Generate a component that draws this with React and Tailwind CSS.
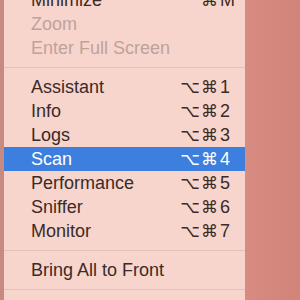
import React from 'react';

const ROWS = [
  { label: 'Minimize', mods: '⌘', key: 'M' },
  { label: 'Zoom', disabled: true },
  { label: 'Enter Full Screen', disabled: true },
  { sep: true },
  { label: 'Assistant', mods: '⌥⌘', key: '1' },
  { label: 'Info', mods: '⌥⌘', key: '2' },
  { label: 'Logs', mods: '⌥⌘', key: '3' },
  { label: 'Scan', mods: '⌥⌘', key: '4', active: true },
  { label: 'Performance', mods: '⌥⌘', key: '5' },
  { label: 'Sniffer', mods: '⌥⌘', key: '6' },
  { label: 'Monitor', mods: '⌥⌘', key: '7' },
  { sep: true },
  { label: 'Bring All to Front' },
  { sep: true },
];

function Row({ row }) {
  if (row.sep) {
    return (
      <div className="h-[15px] flex items-center">
        <div className="w-full h-px bg-[#e6bfb5]" />
      </div>
    );
  }
  const color = row.active
    ? 'text-white bg-[#3d7fde]'
    : row.disabled
    ? 'text-[#bda39c]'
    : 'text-[#3a2b28]';
  return (
    <div className={`h-[24px] flex items-center pl-[27px] pr-[11px] ${color}`}>
      <span className="flex-1 text-[18px] leading-none">{row.label}</span>
      {row.key && (
        <span className="flex items-center text-[18px] leading-none">
          <span className="font-['DejaVu_Sans',sans-serif] text-[17px] tracking-[1px]">{row.mods}</span>
          <span className="w-[15px] pl-[1px]">{row.key}</span>
        </span>
      )}
    </div>
  );
}

export default function App() {
  return (
    <div className="w-[300px] h-[300px] overflow-hidden flex bg-[#d4867b] font-['Liberation_Sans',Arial,sans-serif]">
      <div className="w-[4px] h-full bg-[#c78a80]" />
      <div className="w-[241px] h-full bg-[#f7d5cc]">
        <div className="-mt-[12px]">
          {ROWS.map((row, i) => (
            <Row key={i} row={row} />
          ))}
        </div>
      </div>
      <div className="flex-1 h-full bg-gradient-to-r from-[#d88b80] to-[#d0847a]" />
    </div>
  );
}
